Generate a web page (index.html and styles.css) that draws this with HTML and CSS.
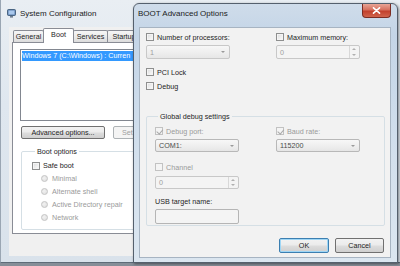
FILE: index.html
```html
<!DOCTYPE html>
<html lang="en">
  <head>
    <meta charset="UTF-8" />
    <title>BOOT Advanced Options</title>
    <link rel="stylesheet" href="styles.css">
  </head>
  <body>
    <!-- System Configuration (inactive, behind) -->
    <div class="window msconfig">
      <div class="titlebar">
        <svg class="app-icon" width="9" height="9" viewBox="0 0 9 9">
          <rect x="0.5" y="0.5" width="8" height="6" rx="1" fill="#5b7fae" stroke="#34506f" stroke-width="0.8" />
          <rect x="1.5" y="1.5" width="6" height="4" fill="#a9c8ec" />
          <rect x="3" y="7" width="3" height="1.6" fill="#6f7f90" />
        </svg>
        <span class="title">System Configuration</span>
      </div>
      <div class="client">
        <div class="tabs">
          <div class="tab tab-general">General</div>
          <div class="tab tab-boot active">Boot</div>
          <div class="tab tab-services">Services</div>
          <div class="tab tab-startup">Startup</div>
        </div>
        <div class="tab-panel">
          <div class="listbox">
            <div class="list-item selected">Windows 7 (C:\Windows) : Curren</div>
          </div>
          <div class="button-row">
            <button class="btn btn-advanced">Advanced options...</button>
            <button class="btn btn-default" disabled>Set</button>
          </div>
          <fieldset class="group boot-options">
            <legend>Boot options</legend>
            <label class="check-row"><span class="checkbox"></span>Safe boot</label>
            <label class="radio-row"><span class="radio"></span>Minimal</label>
            <label class="radio-row"><span class="radio"></span>Alternate shell</label>
            <label class="radio-row"><span class="radio"></span>Active Directory repair</label>
            <label class="radio-row"><span class="radio"></span>Network</label>
          </fieldset>
        </div>
      </div>
    </div>

    <!-- BOOT Advanced Options dialog -->
    <div class="window dialog">
      <div class="titlebar">
        <span class="title">BOOT Advanced Options</span>
        <div class="close-btn">
          <svg width="9" height="7" viewBox="0 0 9 7">
            <path d="M1.5 0.8 L7.5 6.2 M7.5 0.8 L1.5 6.2" stroke="#fff" stroke-width="1.6" stroke-linecap="round" />
          </svg>
        </div>
      </div>
      <div class="client">
        <div class="columns top-options">
          <div class="col">
            <label class="check-row"><span class="checkbox"></span>Number of processors:</label>
            <div class="combo disabled combo-procs"><span>1</span><span class="arrow"></span></div>
            <label class="check-row pci-row"><span class="checkbox"></span>PCI Lock</label>
            <label class="check-row debug-row"><span class="checkbox"></span>Debug</label>
          </div>
          <div class="col">
            <label class="check-row"><span class="checkbox"></span>Maximum memory:</label>
            <div class="spin disabled spin-memory">
              <span>0</span>
              <span class="spin-arrows"><span class="up"></span><span class="down"></span></span>
            </div>
          </div>
        </div>

        <fieldset class="group debug-settings">
          <legend>Global debug settings</legend>
          <div class="columns debug-columns">
            <div class="col">
              <label class="check-row disabled"><span class="checkbox checked"></span>Debug port:</label>
              <div class="combo combo-port"><span>COM1:</span><span class="arrow"></span></div>
              <label class="check-row disabled channel-row"><span class="checkbox"></span>Channel</label>
              <div class="spin disabled spin-channel">
                <span>0</span>
                <span class="spin-arrows"><span class="up"></span><span class="down"></span></span>
              </div>
              <div class="field-label">USB target name:</div>
              <div class="textbox"></div>
            </div>
            <div class="col">
              <label class="check-row disabled"><span class="checkbox checked"></span>Baud rate:</label>
              <div class="combo combo-baud"><span>115200</span><span class="arrow"></span></div>
            </div>
          </div>
        </fieldset>

        <div class="dialog-buttons">
          <button class="btn btn-ok">OK</button>
          <button class="btn btn-cancel">Cancel</button>
        </div>
      </div>
    </div>
  </body>
</html>
```

FILE: styles.css
```css
* {
  margin: 0;
  padding: 0;
  box-sizing: border-box;
}

body {
  position: relative;
  width: 400px;
  height: 266px;
  overflow: hidden;
  background-color: #868e98;
  font-family: "Liberation Sans", Arial, sans-serif;
  font-size: 7.2px;
  color: #1e1e1e;
}

/* ---------- windows ---------- */

.window {
  position: absolute;
  display: flex;
  flex-direction: column;
}

.titlebar {
  display: flex;
  align-items: flex-start;
  height: 23px;
  flex-shrink: 0;
}

.title {
  font-size: 8px;
  line-height: 11px;
  color: #1b1b1b;
}

.msconfig {
  left: 0;
  top: 0;
  width: 400px;
  height: 263px;
  padding: 0 8px 6px 8px;
  background: linear-gradient(180deg, #e9eef3 0%, #dfe7ef 40%, #d9e2eb 100%);
  border-left: 1px solid #9aa6b3;
  border-bottom: 1px solid #5e6b78;
}

.msconfig .titlebar {
  height: 27px;
  padding-top: 8px;
  margin-left: -2px;
  gap: 4px;
}

.app-icon {
  margin-top: 1px;
}

.msconfig .client {
  flex: 1;
  width: 128px;
  overflow: hidden;
  background-color: #f0f0f0;
  padding-left: 3px;
}

/* tabs */

.tabs {
  display: flex;
  align-items: flex-end;
  height: 15px;
  padding-left: 1px;
}

.tab {
  flex-shrink: 0;
  height: 12px;
  line-height: 11px;
  text-align: center;
  border: 1px solid #898c95;
  border-bottom: none;
  border-radius: 2px 2px 0 0;
  background: linear-gradient(180deg, #f6f6f6 0%, #ebebeb 50%, #dcdcdc 100%);
  margin-right: -1px;
}

.tab.active {
  position: relative;
  z-index: 1;
  height: 15px;
  margin-bottom: -1px;
  line-height: 12px;
  background: #fff;
}

.tab-general { width: 31px; }
.tab-boot { width: 31px; }
.tab-services { width: 35px; }
.tab-startup { width: 34px; }

.tab-panel {
  width: 300px;
  background-color: #fff;
  border: 1px solid #898c95;
  padding: 6px 0 3px 7px;
}

.listbox {
  width: 220px;
  height: 72px;
  border: 1px solid #828790;
  padding: 1px;
}

.list-item {
  height: 10px;
  line-height: 10px;
  white-space: nowrap;
  color: #fff;
}

.list-item.selected {
  background-color: #3399ff;
}

.button-row {
  display: flex;
  gap: 8px;
  margin-top: 5px;
  padding-left: 1px;
}

/* ---------- buttons ---------- */

.btn {
  flex-shrink: 0;
  height: 13px;
  font-family: inherit;
  font-size: 7.2px;
  color: #1e1e1e;
  border: 1px solid #707070;
  border-radius: 2px;
  background: linear-gradient(180deg, #f2f2f2 0%, #ebebeb 48%, #dddddd 52%, #cfcfcf 100%);
}

.btn:disabled {
  color: #a0a0a0;
  border-color: #adb2b5;
  background: #f4f4f4;
}

.btn-advanced { width: 84px; }
.btn-default { width: 62px; text-align: left; padding-left: 8px; }

/* ---------- group boxes ---------- */

.group {
  border: 1px solid #d5dfe5;
  border-radius: 2px;
}

.group legend {
  margin-left: 3px;
  padding: 0 2px;
  line-height: 9px;
  color: #1e1e1e;
}

.boot-options {
  width: 220px;
  margin: 8px 0 0 1px;
  padding: 3px 0 5px 10px;
}

/* ---------- check boxes & radios ---------- */

.check-row {
  display: flex;
  align-items: center;
  gap: 3px;
  height: 10px;
  white-space: nowrap;
}

.boot-options .check-row {
  height: 13px;
}

.checkbox {
  width: 8px;
  height: 8px;
  flex-shrink: 0;
  border: 1px solid #8e8f8f;
  background: linear-gradient(135deg, #d9dadb 0%, #eeeeee 55%, #fbfbfb 100%);
  box-shadow: inset 0 0 0 1px #f4f4f4;
}

.check-row.disabled {
  color: #9a9a9a;
}

.check-row.disabled .checkbox {
  border-color: #c2c2c2;
  background: #f4f4f4;
}

.checkbox.checked {
  position: relative;
}

.checkbox.checked::after {
  content: "";
  position: absolute;
  left: 1.5px;
  top: 0;
  width: 2.5px;
  height: 4.5px;
  border-right: 1px solid #a8a8a8;
  border-bottom: 1px solid #a8a8a8;
  transform: rotate(40deg);
}

.radio-row {
  display: flex;
  align-items: center;
  gap: 4px;
  height: 13px;
  padding-left: 9px;
  color: #9a9a9a;
  white-space: nowrap;
}

.radio {
  width: 7px;
  height: 7px;
  border-radius: 50%;
  border: 1px solid #c4c4c4;
  background: radial-gradient(circle at 40% 40%, #f2f2f2 0%, #dcdcdc 100%);
}

/* ---------- dialog ---------- */

.dialog {
  left: 133px;
  top: 3px;
  width: 265px;
  height: 260px;
  padding: 0 6px 4px 5px;
  border: 1px solid #55606d;
  border-radius: 6px 6px 0 0;
  background: linear-gradient(180deg, #cfdcea 0%, #c4d5e7 12%, #d3e0ed 60%, #dbe6f0 100%);
  box-shadow: 1px 1px 3px rgba(0, 0, 0, 0.45);
}

.dialog .titlebar {
  padding: 4px 0 0 0;
  margin-left: -1px;
}

.close-btn {
  display: flex;
  align-items: center;
  justify-content: center;
  width: 29px;
  height: 14px;
  margin-left: auto;
  margin-top: -4px;
  border: 1px solid #7c2c22;
  border-top: none;
  border-radius: 0 0 4px 4px;
  background: linear-gradient(180deg, #e8a596 0%, #d6705e 45%, #c2402c 55%, #d0644c 100%);
}

.dialog .client {
  flex: 1;
  background-color: #f2f2f2;
  border: 1px solid #a7b4c2;
  padding: 4px 6px 0 6px;
}

.columns {
  display: grid;
}

.top-options {
  grid-template-columns: 130px 84px;
}

.debug-columns {
  grid-template-columns: 121px 84px;
}

.combo,
.spin,
.textbox {
  width: 84px;
  display: flex;
  align-items: center;
  justify-content: space-between;
  border: 1px solid #b8b8b8;
  border-radius: 2px;
  padding: 0 4px 0 3px;
}

.combo {
  background: linear-gradient(180deg, #f7f7f7 0%, #efefef 50%, #e6e6e6 100%);
  color: #4a4a4a;
}

.combo.disabled,
.spin.disabled {
  color: #a0a0a0;
  border-color: #c8c8c8;
}

.spin {
  background: #f4f4f4;
  padding-right: 1px;
}

.arrow {
  width: 0;
  height: 0;
  border-left: 2px solid transparent;
  border-right: 2px solid transparent;
  border-top: 2px solid #9a9a9a;
}

.spin-arrows {
  display: flex;
  flex-direction: column;
  justify-content: space-between;
  align-items: center;
  width: 9px;
  height: 100%;
  padding: 2px 0;
  border-left: 1px solid #d8d8d8;
}

.spin-arrows .up {
  border-left: 2px solid transparent;
  border-right: 2px solid transparent;
  border-bottom: 2px solid #b0b0b0;
}

.spin-arrows .down {
  border-left: 2px solid transparent;
  border-right: 2px solid transparent;
  border-top: 2px solid #b0b0b0;
}

.combo-procs { height: 14px; margin-top: 3px; }
.spin-memory { height: 14px; margin-top: 3px; }
.pci-row { margin-top: 8px; }
.debug-row { margin-top: 4px; }

.debug-settings {
  width: 239px;
  margin-top: 21px;
  padding: 5px 0 1px 8px;
}

.combo-port,
.combo-baud { height: 13px; margin-top: 3px; }
.channel-row { margin-top: 10px; }
.spin-channel { height: 13px; margin-top: 4px; }

.field-label {
  height: 10px;
  line-height: 10px;
  margin-top: 8px;
}

.textbox {
  height: 15px;
  margin-top: 2px;
  border-color: #b5b5b5;
  background: #f4f4f4;
}

.dialog-buttons {
  display: flex;
  justify-content: flex-end;
  gap: 6px;
  margin-top: 12px;
}

.dialog-buttons .btn {
  height: 15px;
}

.btn-ok {
  width: 50px;
  border-color: #3c7fb1;
  box-shadow: inset 0 0 0 1px #9fd6f5;
}

.btn-cancel { width: 49px; }
```
